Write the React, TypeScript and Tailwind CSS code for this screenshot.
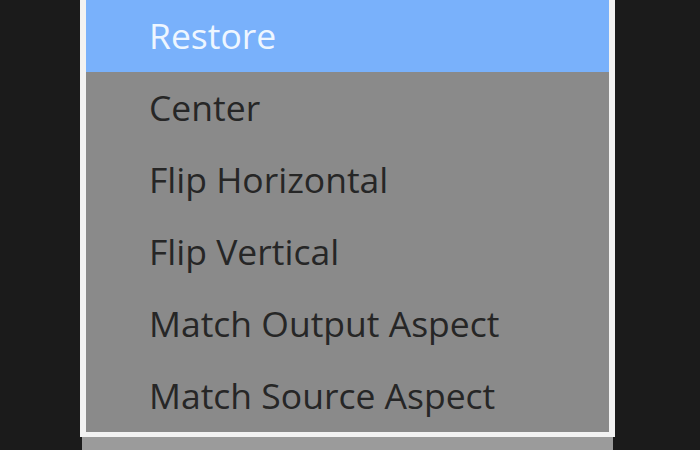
import React from "react";

const items = [
  "Restore",
  "Center",
  "Flip Horizontal",
  "Flip Vertical",
  "Match Output Aspect",
  "Match Source Aspect",
];

export default function App() {
  return (
    <div
      className="w-[700px] h-[450px] bg-[#1b1b1b] overflow-hidden flex"
      style={{ fontFamily: '"Open Sans", "Noto Sans", sans-serif' }}
    >
      <div className="ml-[80px] w-[535px] flex flex-col">
        <div className="border-x-[6px] border-b-[5px] border-[#f2f2f2] bg-[#8a8a8a] flex flex-col">
          {items.map((label, i) => (
            <div
              key={label}
              className={
                i === 0
                  ? "h-[72px] flex items-center pl-[63px] bg-[#79b1fb] text-[#eef6ff] text-[35.5px]"
                  : "h-[72px] flex items-center pl-[63px] text-[#262626] text-[35.5px]"
              }
            >
              {label}
            </div>
          ))}
        </div>
        <div className="h-[13px] bg-[#9b9b9b] mx-[2px]" />
      </div>
    </div>
  );
}
